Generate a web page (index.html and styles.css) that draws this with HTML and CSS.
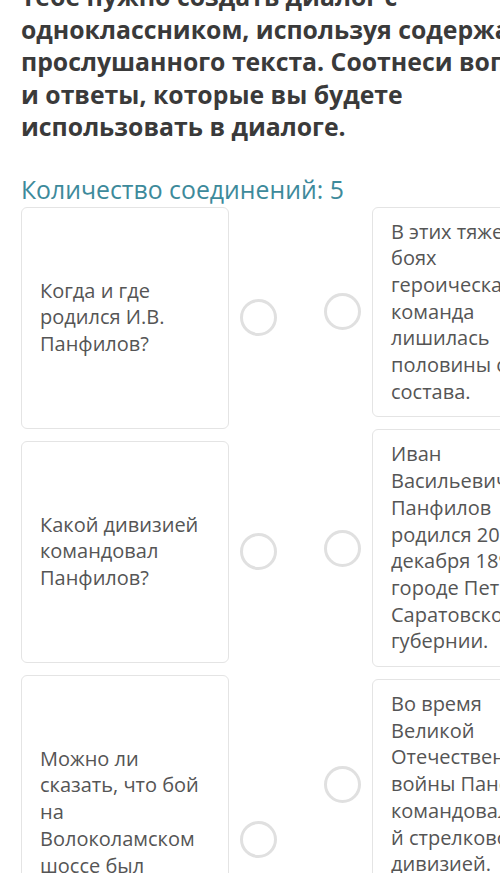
FILE: index.html
```html
<!DOCTYPE html>
<html lang="ru">
<head>
    <meta charset="UTF-8">
    <meta name="viewport" content="width=device-width, initial-scale=1.0">
    <title>Соотнеси вопросы и ответы</title>
    <link rel="stylesheet" href="styles.css">
</head>
<body>
    <div class="task">
        <h1 class="task-title">Тебе нужно создать диалог с одноклассником, используя содержание прослушанного текста. Соотнеси вопросы и ответы, которые вы будете использовать в диалоге.</h1>

        <div class="match-count">Количество соединений: 5</div>

        <div class="match">
            <!-- вопросы -->
            <div class="match-col">
                <div class="match-item">
                    <div class="card card-question">Когда и где родился И.В. Панфилов?</div>
                    <span class="dot"></span>
                </div>
                <div class="match-item">
                    <div class="card card-question">Какой дивизией командовал Панфилов?</div>
                    <span class="dot"></span>
                </div>
                <div class="match-item">
                    <div class="card card-question">Можно ли сказать, что бой на Волоколамском шоссе был решающим для защиты Москвы?</div>
                    <span class="dot"></span>
                </div>
            </div>

            <!-- ответы -->
            <div class="match-col">
                <div class="match-item">
                    <span class="dot"></span>
                    <div class="card card-answer">В этих тяжелых боях героическая команда лишилась половины своего состава.</div>
                </div>
                <div class="match-item">
                    <span class="dot"></span>
                    <div class="card card-answer">Иван<br>Васильевич Панфилов родился 20 декабря 1892 г. в городе Петровск Саратовской губернии.</div>
                </div>
                <div class="match-item">
                    <span class="dot"></span>
                    <div class="card card-answer">Во время Великой Отечественной войны Панфилов командовал 316-й стрелковой дивизией.</div>
                </div>
            </div>
        </div>
    </div>
</body>
</html>
```

FILE: styles.css
```css
html, body {
    overflow: hidden;
}

body {
    margin: 0;
    padding: 0;
    background-color: #fff;
    font-family: "Open Sans", Arial, sans-serif;
}

.task {
    width: 560px;
    padding-left: 21px;
}

.task-title {
    width: 550px;
    margin: -20px 0 0;
    font-size: 24.8px;
    line-height: 32.5px;
    font-weight: 700;
    color: #3a3a3a;
}

.match-count {
    margin-top: 30px;
    font-size: 24.8px;
    line-height: 32px;
    color: #3d8a9b;
}

.match {
    display: flex;
    gap: 47px;
    margin-top: 2px;
}

.match-col {
    display: flex;
    flex-direction: column;
    gap: 12px;
}

.match-item {
    display: flex;
    align-items: center;
    gap: 11px;
}

.card {
    width: 208px;
    box-sizing: border-box;
    border: 1px solid #e4e4e4;
    border-radius: 6px;
    background-color: #fff;
    font-size: 20px;
    line-height: 26.7px;
    color: #555;
}

.card-question {
    min-height: 222px;
    padding: 70px 18px;
    display: flex;
    align-items: center;
}

.card-answer {
    padding: 11px 16px 11px 18px;
}

.dot {
    flex: none;
    width: 37px;
    height: 37px;
    box-sizing: border-box;
    border: 3px solid #e0e0e0;
    border-radius: 50%;
}
```
